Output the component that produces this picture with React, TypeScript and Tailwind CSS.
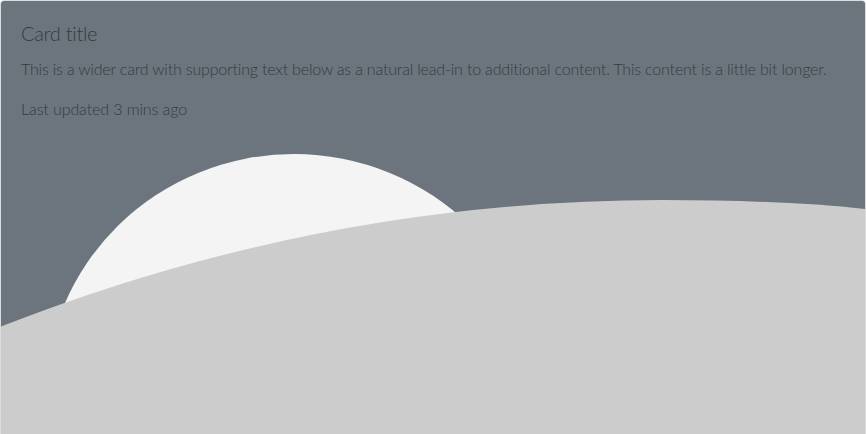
import React from 'react';

const Placeholder: React.FC = () => (
  <svg
    className="block w-full h-full"
    viewBox="0 0 864 434"
    preserveAspectRatio="none"
    aria-hidden="true"
  >
    <rect width="864" height="434" fill="#6c757d" />
    <ellipse cx="293" cy="398" rx="249" ry="245" fill="#f4f4f4" />
    <path d="M-1,326 Q322,199 662,199 Q780,199 865,208 L865,434 L-1,434 Z" fill="#cccccc" />
  </svg>
);

export default function App() {
  return (
    <div className="h-[434px] w-[866px] overflow-hidden bg-white">
      <div
        className="relative h-[436px] w-full overflow-hidden rounded-t-[4px] border border-[#dcdcdc] text-[#343a40]"
        style={{ fontFamily: '"Segoe UI", Lato, "Open Sans", sans-serif' }}
      >
        <Placeholder />
        <div className="absolute inset-0 p-5 [font-variant-ligatures:none]">
          <h5 className="mb-3 text-[20px] leading-[1.2] font-light tracking-[-0.3px]">Card title</h5>
          <p className="mb-4 text-[16px] leading-6 font-light tracking-[-0.18px] whitespace-nowrap">
            This is a wider card with supporting text below as a natural lead-in to additional content. This content is a little bit longer.
          </p>
          <p className="text-[16px] leading-6 font-light tracking-[-0.1px]">Last updated 3 mins ago</p>
        </div>
      </div>
    </div>
  );
}
